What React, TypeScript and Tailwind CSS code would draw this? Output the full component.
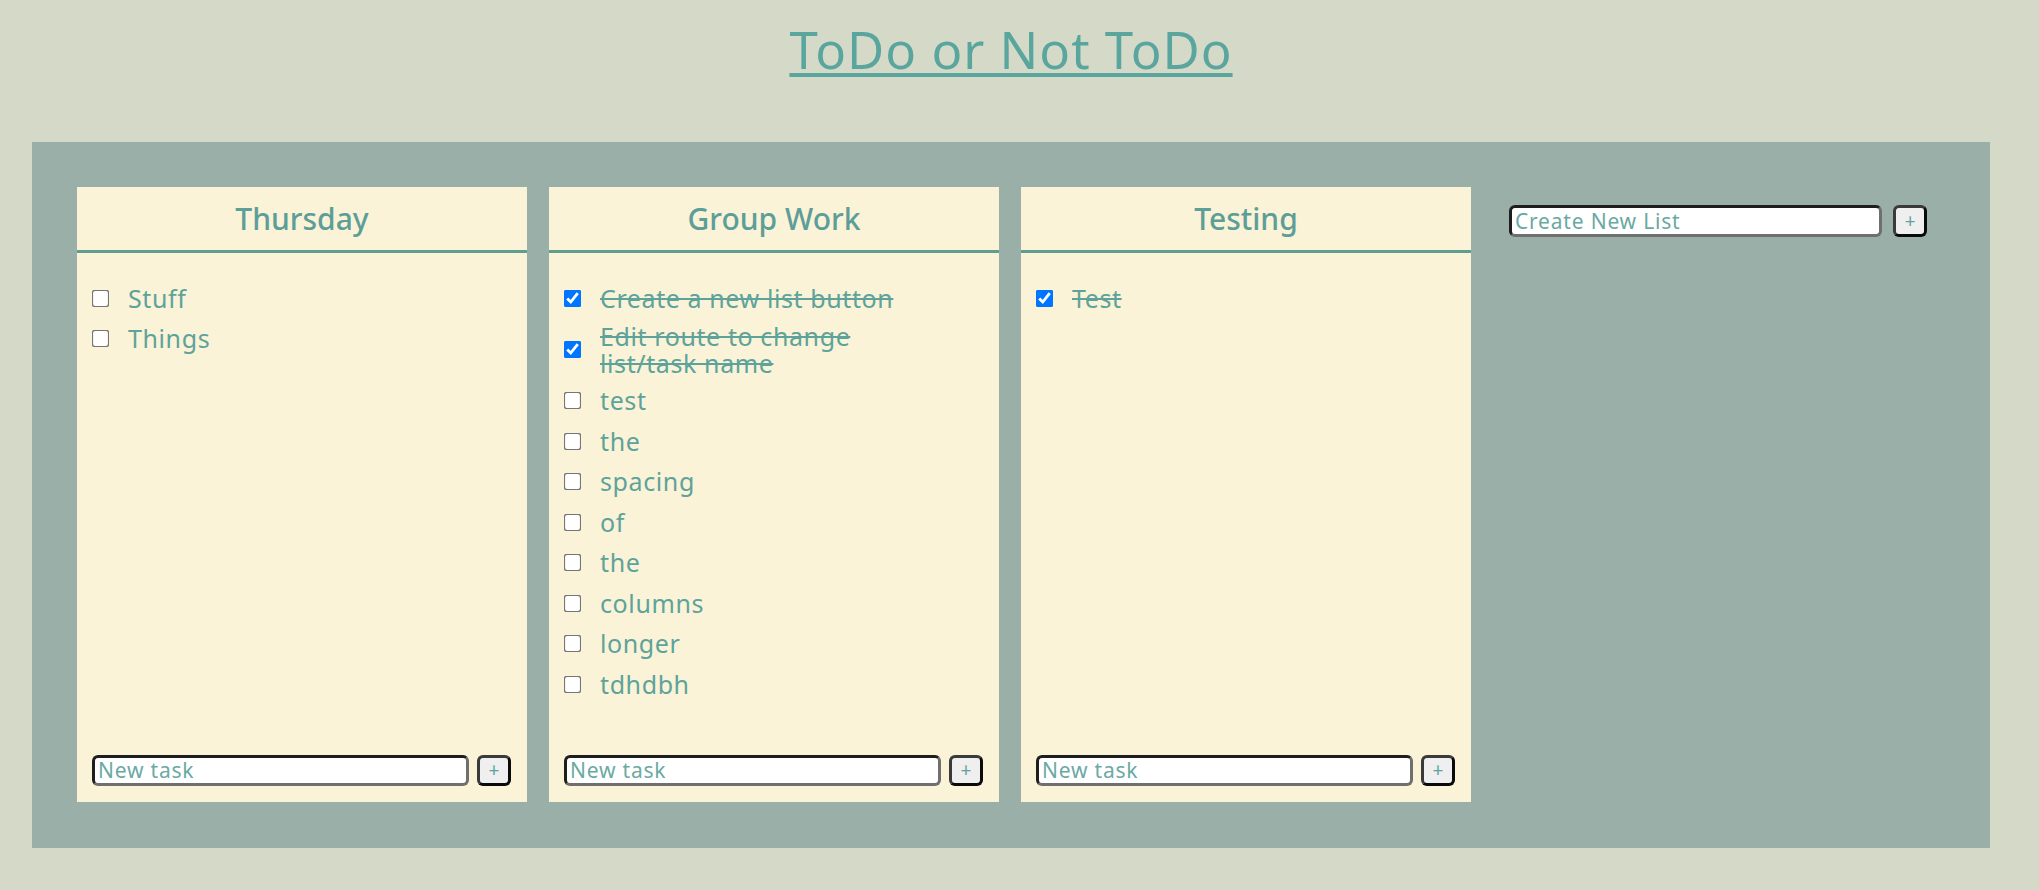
import { useState } from 'react';

type Task = { name: string; done: boolean };
type List = { title: string; tasks: Task[] };

const initialLists: List[] = [
  {
    title: 'Thursday',
    tasks: [
      { name: 'Stuff', done: false },
      { name: 'Things', done: false },
    ],
  },
  {
    title: 'Group Work',
    tasks: [
      { name: 'Create a new list button', done: true },
      { name: 'Edit route to change list/task name', done: true },
      { name: 'test', done: false },
      { name: 'the', done: false },
      { name: 'spacing', done: false },
      { name: 'of', done: false },
      { name: 'the', done: false },
      { name: 'columns', done: false },
      { name: 'longer', done: false },
      { name: 'tdhdbh', done: false },
    ],
  },
  {
    title: 'Testing',
    tasks: [{ name: 'Test', done: true }],
  },
];

const inputClass =
  "h-[31px] rounded-[6px] border-[3px] border-t-[#1e1e1e] border-l-[#1e1e1e] border-r-[#6f6f6f] border-b-[#6f6f6f] bg-white px-[3px] text-[21px] tracking-[0.8px] text-[#5ea39b] placeholder:text-[#6aa9a2] outline-none";

const buttonClass =
  "h-[31px] w-[34px] rounded-[6px] border-[3px] border-t-[#3a3a3a] border-l-[#3a3a3a] border-r-[#0a0a0a] border-b-[#0a0a0a] bg-[#efefef] text-[19px] leading-none text-[#5ea39b]";

function ListColumn({ list, onToggle }: { list: List; onToggle: (i: number) => void }) {
  const [draft, setDraft] = useState('');

  return (
    <div className="flex h-[615px] w-[450px] flex-col bg-[#faf3d7]">
      <div className="flex h-[66px] items-center justify-center border-b-[3px] border-[#5f9e8f]">
        <h2 className="text-[30px] font-medium text-[#5d9e98]">{list.title}</h2>
      </div>

      <ul className="flex-1 px-[15px] pt-[25px]">
        {list.tasks.map((task, i) => (
          <li key={i} className="flex min-h-[40.5px] items-center gap-[21px] py-[4px]">
            <input
              type="checkbox"
              checked={task.done}
              onChange={() => onToggle(i)}
              className="m-0 ml-[2px] shrink-0 scale-[1.35] accent-[#0075ff]"
            />
            <span
              className={
                task.done
                  ? 'max-w-[330px] text-[25px] leading-[27px] tracking-[0.6px] text-[#5ea39b] line-through decoration-[2px]'
                  : 'max-w-[330px] text-[25px] leading-[27px] tracking-[0.6px] text-[#5ea39b]'
              }
            >
              {task.name}
            </span>
          </li>
        ))}
      </ul>

      <form
        className="flex items-center gap-[8px] px-[15px] pb-[16px]"
        onSubmit={(e) => {
          e.preventDefault();
          setDraft('');
        }}
      >
        <input
          type="text"
          value={draft}
          onChange={(e) => setDraft(e.target.value)}
          placeholder="New task"
          className={`${inputClass} w-[377px]`}
        />
        <button type="submit" className={buttonClass}>
          +
        </button>
      </form>
    </div>
  );
}

export default function App() {
  const [lists, setLists] = useState<List[]>(initialLists);
  const [newList, setNewList] = useState('');

  const toggleTask = (li: number, ti: number) => {
    setLists((prev) =>
      prev.map((l, i) =>
        i !== li
          ? l
          : { ...l, tasks: l.tasks.map((t, j) => (j === ti ? { ...t, done: !t.done } : t)) }
      )
    );
  };

  return (
    <div className="min-h-screen bg-[#d5dac8] font-['Noto_Sans',sans-serif]">
      <div className="w-[2022px]">
        <h1 className="pt-[24px] text-center text-[51px] leading-[51px] tracking-[1px]">
          <a
            href="#"
            className="text-[#5aa69f] underline decoration-[4px] underline-offset-[4px]"
          >
            ToDo or Not ToDo
          </a>
        </h1>

        <main className="mx-[32px] mt-[67px] flex gap-[22px] bg-[#9bafa9] pb-[46px] pl-[45px] pr-[45px] pt-[45px]">
          {lists.map((list, i) => (
            <ListColumn key={list.title} list={list} onToggle={(ti) => toggleTask(i, ti)} />
          ))}

          <form
            className="flex w-[450px] items-start gap-[11px] px-[16px] pt-[18px]"
            onSubmit={(e) => {
              e.preventDefault();
              if (!newList.trim()) return;
              setLists([...lists, { title: newList.trim(), tasks: [] }]);
              setNewList('');
            }}
          >
            <input
              type="text"
              value={newList}
              onChange={(e) => setNewList(e.target.value)}
              placeholder="Create New List"
              className={`${inputClass} h-[32px] w-[375px]`}
            />
            <button type="submit" className={`${buttonClass} h-[32px]`}>
              +
            </button>
          </form>
        </main>
      </div>
    </div>
  );
}
